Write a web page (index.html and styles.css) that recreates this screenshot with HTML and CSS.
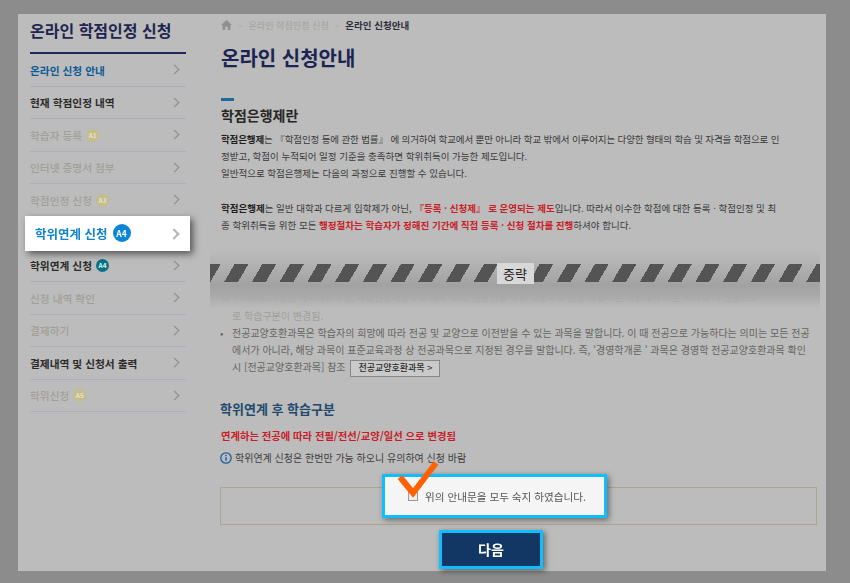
FILE: index.html
```html
<!DOCTYPE html>
<html lang="ko">
<head>
    <meta charset="UTF-8">
    <title>온라인 신청안내</title>
    <link rel="stylesheet" href="styles.css">
</head>
<body>
    <div class="page">
        <aside class="sidebar">
            <h2 class="side-title">온라인 학점인정 신청</h2>
            <ul class="menu">
                <li class="current">온라인 신청 안내</li>
                <li class="dark">현재 학점인정 내역</li>
                <li>학습자 등록 <span class="badge">A1</span></li>
                <li>인터넷 증명서 첨부</li>
                <li>학점인정 신청 <span class="badge">A3</span></li>
                <li class="pop">학위연계 신청 <span class="badge">A4</span></li>
                <li class="dark">학위연계 신청 <span class="badge teal">A4</span></li>
                <li>신청 내역 확인</li>
                <li>결제하기</li>
                <li class="dark">결제내역 및 신청서 출력</li>
                <li>학위신청 <span class="badge">A5</span></li>
            </ul>
        </aside>

        <main class="content">
            <div class="crumbs">
                <svg class="home" viewBox="0 0 12 11" width="11" height="10"><path d="M6 0 0 5.5h1.6V11h3V7.4h2.8V11h3V5.5H12z" fill="#8f8f8f"/></svg>
                <span class="sep">&gt;</span>
                <span>온라인 학점인정 신청</span>
                <span class="sep">&gt;</span>
                <strong>온라인 신청안내</strong>
            </div>
            <h1>온라인 신청안내</h1>

            <div class="tick"></div>
            <h3>학점은행제란</h3>
            <p class="para">
                <span class="tight"><b>학점은행제</b>는 『학점인정 등에 관한 법률』 에 의거하여 학교에서 뿐만 아니라 학교 밖에서 이루어지는 다양한 형태의 학습 및 자격을 학점으로 인</span><br>
                정받고, 학점이 누적되어 일정 기준을 충족하면 학위취득이 가능한 제도입니다.<br>
                일반적으로 학점은행제는 다음의 과정으로 진행할 수 있습니다.
            </p>
            <p class="para second">
                <b>학점은행제</b>는 일반 대학과 다르게 입학제가 아닌, <b class="red">『등록 · 신청제』 로 운영되는 제도</b>입니다. 따라서 이수한 학점에 대한 등록 · 학점인정 및 최<br>
                종 학위취득을 위한 모든 <b class="red">행정절차는 학습자가 정해진 기간에 직접 등록 · 신청 절차를 진행</b>하셔야 합니다.
            </p>

            <div class="cut">
                <div class="stripes"><span>중략</span></div>
                <p class="ghost">과목이위재, 사정인 재외국유학생, 학점인정대상학교 재학 학력, 전문인정 학위 교양과과 전공 과정이른 과정에서 기준 미기재 시 전공으로</p>
            </div>

            <div class="notes">
                <p class="note-cont">로 학습구분이 변경됨.</p>
                <p class="note">전공교양호환과목은 학습자의 희망에 따라 전공 및 교양으로 이전받을 수 있는 과목을 말합니다. 이 때 전공으로 가능하다는 의미는 모든 전공<br>
                에서가 아니라, 해당 과목이 표준교육과정 상 전공과목으로 지정된 경우를 말합니다. 즉, '경영학개론 ' 과목은 경영학 전공교양호환과목 확인<br>
                시 [전공교양호환과목] 참조 <span class="mini-btn">전공교양호환과목 &gt;</span></p>
            </div>

            <h4>학위연계 후 학습구분</h4>
            <p class="red-line">연계하는 전공에 따라 전필/전선/교양/일선 으로 변경됨</p>
            <p class="info">
                <svg viewBox="0 0 12 12" width="12" height="12"><circle cx="6" cy="6" r="5.2" fill="none" stroke="#1c5f9e" stroke-width="1.3"/><path d="M6 5.2v3.6M6 3v1.2" stroke="#1c5f9e" stroke-width="1.4"/></svg>
                학위연계 신청은 한번만 가능 하오니 유의하여 신청 바람
            </p>
            <div class="agree-box"></div>
        </main>
    </div>

    <div class="agree">
        <span class="checkbox"></span>
        위의 안내문을 모두 숙지 하였습니다.
    </div>
    <svg class="check" viewBox="0 0 44 38" width="44" height="38"><path d="M3 17 16 33 39 3" fill="none" stroke="#ff6000" stroke-width="6"/></svg>
    <div class="next">다음</div>
</body>
</html>
```

FILE: styles.css
```css
html, body {
    height: 100%;
}

body {
    margin: 0;
    padding: 14px 24px 12px 18px;
    box-sizing: border-box;
    background: #8c8c8c;
    font-family: "Noto Sans CJK KR", "Noto Sans", sans-serif;
    overflow: hidden;
}

.page {
    display: flex;
    height: 557px;
    background: #bcbcbc;
    filter: blur(0.5px);
}

/* sidebar */
.sidebar {
    width: 156px;
    margin-left: 12px;
    flex: none;
}

.side-title {
    margin: 0;
    height: 38px;
    line-height: 32px;
    font-size: 16px;
    font-weight: 700;
    color: #1e2550;
    border-bottom: 2px solid #23285c;
    white-space: nowrap;
}

.menu {
    list-style: none;
    margin: 0;
    padding: 0;
}

.menu li {
    position: relative;
    height: 32.5px;
    box-sizing: border-box;
    padding-top: 1px;
    display: flex;
    align-items: center;
    gap: 4px;
    font-size: 10.7px;
    font-weight: 500;
    color: #a0a098;
    border-bottom: 1px solid #adadc0;
    white-space: nowrap;
}

.menu li::after {
    content: "";
    position: absolute;
    right: 8px;
    top: 12px;
    width: 6px;
    height: 6px;
    border-top: 1px solid #888;
    border-right: 1px solid #888;
    transform: rotate(45deg);
}

.menu li.current {
    color: #0d5a96;
    font-weight: 700;
}

.menu li.dark {
    color: #2b2b2b;
    font-weight: 700;
}

.menu li.pop {
    z-index: 2;
    height: 35px;
    margin: -1px -4px -1px -5px;
    padding: 0 0 0 10px;
    gap: 5px;
    background: #fff;
    border: 0;
    font-size: 12.5px;
    font-weight: 700;
    color: #0f85d0;
    box-shadow: 3px 3px 7px rgba(0, 0, 0, 0.55);
}

.menu li.pop::after {
    right: 12px;
    top: 14px;
    width: 6px;
    height: 6px;
    border-width: 2px;
    border-color: #b5b5b5;
}

.badge {
    width: 13px;
    height: 13px;
    border-radius: 50%;
    background: #c4bd8c;
    color: #e8e4c8;
    font-size: 6.5px;
    font-weight: 700;
    line-height: 13px;
    text-align: center;
}

.teal {
    background: #0f6f86;
    color: #cfe;
}

.pop .badge {
    width: 18px;
    height: 18px;
    line-height: 18px;
    font-size: 8.5px;
    background: #0b86d6;
    color: #fff;
}

/* main column */
.content {
    margin-left: 35px;
    flex: 1;
    min-width: 0;
    position: relative;
    font-size: 9.5px;
    line-height: 17px;
    color: #3a3a3a;
    white-space: nowrap;
}

.crumbs {
    display: flex;
    align-items: center;
    gap: 6px;
    height: 22px;
    font-size: 9.1px;
    color: #a3a39b;
}

.crumbs strong {
    color: #2c2c38;
    font-size: 9.5px;
    font-weight: 700;
}

.sep {
    color: #ababab;
    font-size: 8px;
}

h1 {
    margin: 6px 0 0;
    font-size: 20px;
    line-height: 32px;
    font-weight: 700;
    color: #1c2452;
}

.tick {
    width: 13px;
    height: 3px;
    margin-top: 24px;
    background: #1a6aa0;
}

h3 {
    margin: 4px 0 6px;
    font-size: 14px;
    line-height: 20px;
    font-weight: 700;
    color: #262626;
}

.para {
    margin: 0;
}

.para b {
    color: #1f1f1f;
}

.para.second {
    margin-top: 18px;
}

.para b.red, .red-line {
    color: #c81c28;
    font-weight: 700;
}

.tight {
    letter-spacing: -0.12px;
}

/* cut-off band */
.cut {
    height: 59px;
    margin: 16px 6px 0 -11px;
    padding-top: 14px;
    box-sizing: border-box;
    background: linear-gradient(#bcbcbc, #a2a2a2 60%, #a8a8a8 75%, #bcbcbc);
    overflow: hidden;
}

.stripes {
    display: flex;
    justify-content: center;
    align-items: center;
    height: 18px;
    background: repeating-linear-gradient(-60deg, #545454 0 12px, transparent 12px 24px);
}

.stripes span {
    width: 37px;
    height: 21px;
    background: #d8d8d8;
    color: #222;
    font-size: 13px;
    line-height: 21px;
    text-align: center;
}

.ghost {
    margin: 7px 0 0 11px;
    color: #a9a9a9;
}

.notes {
    margin-top: -2px;
    font-size: 10px;
    color: #8a8a84;
}

.notes p {
    margin: 0;
}

.note-cont {
    padding-left: 11px;
    color: #a0a09a;
}

.note {
    position: relative;
    padding-left: 11px;
    color: #65655f;
}

.note::before {
    content: "•";
    position: absolute;
    left: -1px;
    top: 0;
}

.mini-btn {
    display: inline-block;
    height: 15px;
    padding: 0 7px;
    margin-left: 2px;
    line-height: 14px;
    background: #cacaca;
    border: 1px solid #888;
    color: #2a2a2a;
    font-size: 9px;
    font-weight: 500;
}

h4 {
    margin: 22px 0 0 -1px;
    font-size: 13px;
    line-height: 20px;
    font-weight: 700;
    color: #1f4a6e;
}

.red-line {
    margin: 8px 0 0;
    font-size: 10.3px;
}

.info {
    display: flex;
    align-items: center;
    gap: 3px;
    margin: 5px 0 0 -1px;
    font-size: 10px;
    color: #3c3c3c;
}

.agree-box {
    height: 38px;
    width: 597px;
    margin: 21px 0 0 -1px;
    box-sizing: border-box;
    border: 1px solid #ada68a;
}

/* callouts lying over the page */
.agree {
    position: absolute;
    left: 382px;
    top: 474px;
    width: 225px;
    height: 44px;
    padding-left: 23px;
    box-sizing: border-box;
    display: flex;
    align-items: center;
    gap: 7px;
    background: #f5f5f5;
    border: 3px solid #10bdff;
    box-shadow: 2px 2px 6px rgba(0, 0, 0, 0.45);
    font-size: 10.6px;
    color: #555;
}

.checkbox {
    width: 8px;
    height: 8px;
    border: 1px solid #999;
    background: #eee;
}

.check {
    position: absolute;
    left: 397px;
    top: 460px;
}

.next {
    position: absolute;
    left: 439px;
    top: 530px;
    width: 104px;
    height: 39px;
    box-sizing: border-box;
    background: #133765;
    border: 3px solid #10bdff;
    box-shadow: 2px 2px 6px rgba(0, 0, 0, 0.5);
    color: #fff;
    font-size: 14px;
    font-weight: 700;
    line-height: 33px;
    text-align: center;
}
```
